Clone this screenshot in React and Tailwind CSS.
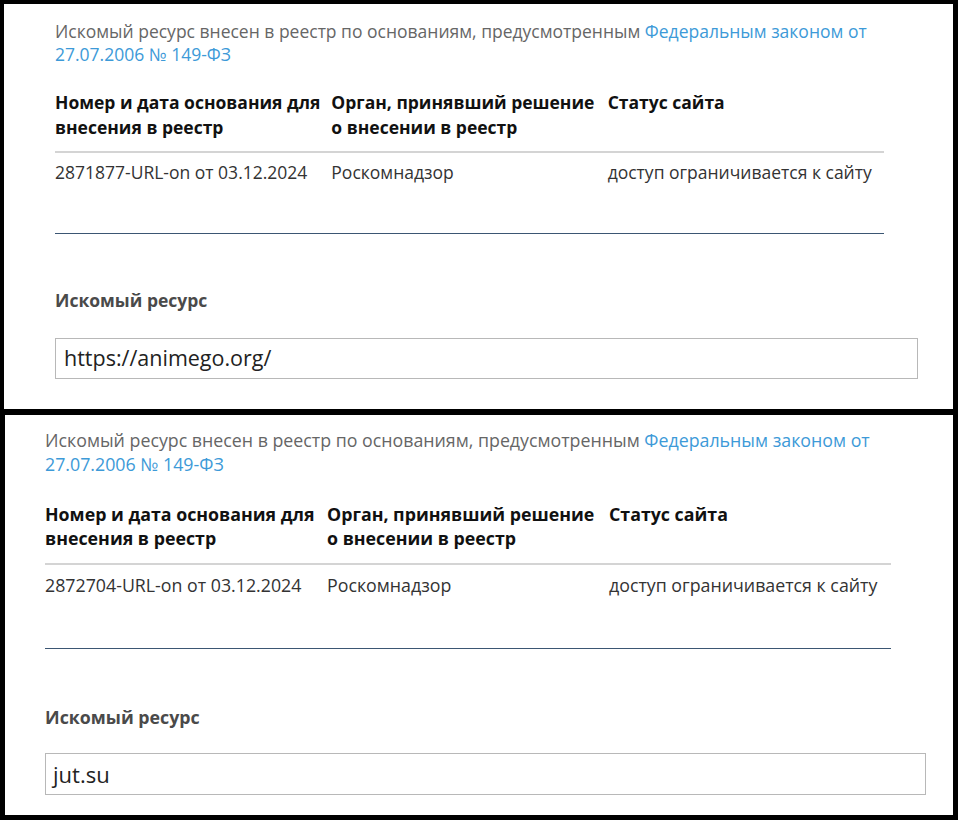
import React from 'react';

const font = { fontFamily: '"Open Sans", "Noto Sans", sans-serif' };

const Panel = ({ record, url, big }) => {
  const text = big ? 'text-[17.8px] leading-[24px]' : 'text-[17.5px] leading-[23px]';
  const rowText = big ? 'text-[17.8px] leading-[24px]' : 'text-[17.5px] leading-[25px]';

  return (
    <div className={big ? 'ml-[5px] w-[948px] h-[400px] bg-white pl-[40px] pt-[13px]' : 'ml-[4px] w-[949px] h-[405px] bg-white pl-[51px] pt-[16px]'}>
      {/* basis paragraph */}
      <p className={`${text} text-[#666] ${big ? 'w-[846px]' : 'w-[829px]'}`}>
        Искомый ресурс внесен в реестр по основаниям, предусмотренным{' '}
        <a className="text-[#3d9ad8]">Федеральным законом от 27.07.2006 № 149-ФЗ</a>
      </p>

      {/* registry table */}
      <div className={big ? 'w-[846px] mt-[26px]' : 'w-[829px] mt-[24px]'}>
        <div className={`grid grid-cols-3 font-bold text-[#111] ${rowText} ${big ? 'pb-[13px]' : 'pb-[11px]'} border-b-2 border-[#d4d4d4]`}>
          <div className="pr-2">Номер и дата основания для внесения в реестр</div>
          <div className="pr-2">Орган, принявший решение о внесении в реестр</div>
          <div>Статус сайта</div>
        </div>
        <div className={`grid grid-cols-3 text-[#333] ${rowText} ${big ? 'pt-[8px] pb-[51px]' : 'pt-[7px] pb-[48px]'} border-b border-[#3b5673]`}>
          <div>{record}</div>
          <div>Роскомнадзор</div>
          <div>доступ ограничивается к сайту</div>
        </div>
      </div>

      {/* searched resource */}
      <div className={`font-bold text-[#4a4a4a] ${rowText} ${big ? 'mt-[56px]' : 'mt-[54px]'}`}>Искомый ресурс</div>
      <div className={`border border-[#b8b8b8] flex items-center text-[#222] ${big ? 'mt-[24px] w-[881px] h-[42px] pl-[7px] text-[22px]' : 'mt-[25px] w-[863px] h-[41px] pl-[8px] text-[21.5px]'}`}>
        {url}
      </div>
    </div>
  );
};

export default function App() {
  return (
    <div className="bg-black w-[958px] h-[820px] pt-[4px] flex flex-col gap-[6px]" style={font}>
      <Panel record="2871877-URL-on от 03.12.2024" url="https://animego.org/" />
      <Panel record="2872704-URL-on от 03.12.2024" url="jut.su" big />
    </div>
  );
}
